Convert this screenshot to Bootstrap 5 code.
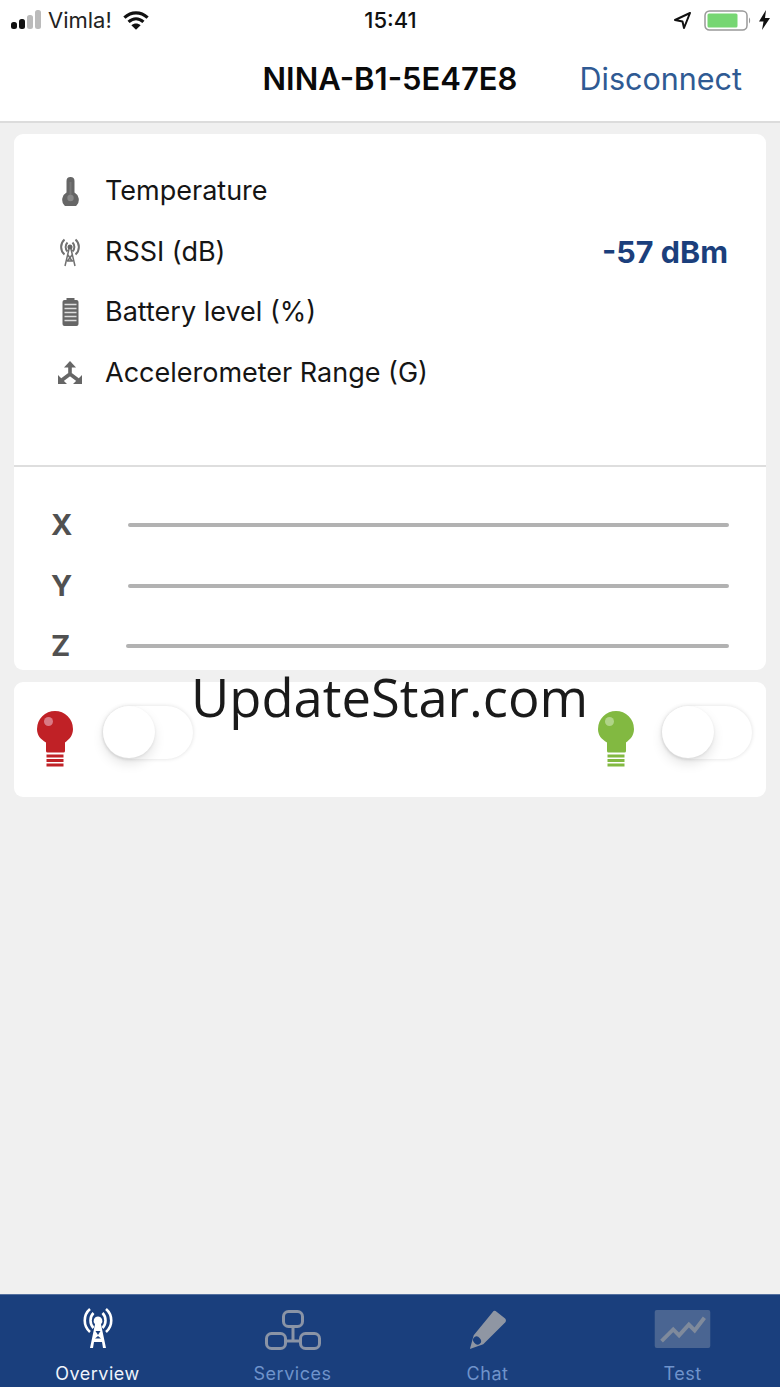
<!DOCTYPE html>
<html lang="en">
<head>
    <meta charset="UTF-8">
    <meta name="viewport" content="width=device-width, initial-scale=1.0">
    <title>NINA-B1-5E47E8</title>
    <link href="https://cdn.jsdelivr.net/npm/bootstrap@5.3.0/dist/css/bootstrap.min.css" rel="stylesheet">
    <style>
        html, body { height: 100%; overflow: hidden; }
        body { background: #f0f0f0; font-family: Inter, "Liberation Sans", sans-serif; color: #111; }
        .phone { height: 1387px; position: relative; }
        .top-area { background: #fff; border-bottom: 2px solid #dcdcdc; height: 123px; }
        .status-bar { height: 40px; padding: 0 10px 0 11px; font-size: 22px; line-height: 1; }
        .status-bar > div { flex: 1 1 0; }
        .status-time { font-weight: 500; font-size: 22px; text-align: center; }
        .carrier { margin-left: 6px; margin-right: 11px; color: #222; }
        .nav-head { height: 81px; position: relative; }
        .nav-title { font-size: 31px; font-weight: 600; color: #0a0a0a; padding-bottom: 2px; }
        .nav-action { position: absolute; right: 38px; top: 24px; font-size: 30.5px; line-height: 1; color: #2f5a93; text-decoration: none; }
        .panel { background: #fff; border-radius: 9px; margin: 0 14px; }
        .panel-a { margin-top: 11px; height: 536px; overflow: hidden; }
        .panel-b { margin-top: 12px; height: 115px; padding: 23px 14px 0 23px; }
        .info-list { height: 333px; padding: 27px 38px 0 36px; border-bottom: 2px solid #dedede; }
        .info-row { height: 60.4px; }
        .info-ico { width: 40px; margin-right: 15px; }
        .info-label { font-size: 27px; color: #151515; padding-top: 1px; }
        .info-val { font-size: 30.5px; font-weight: 700; color: #1b3f7c; }
        .axis-list { padding: 28px 37px 0 37px; }
        .axis-row { height: 60.4px; }
        .axis-name { font-size: 29px; font-weight: 700; color: #515151; width: 77px; }
        .axis-name.short { width: 75px; }
        .axis-line { height: 4px; border-radius: 2px; background: #b2b2b2; }
        .bulb-svg { margin-top: 6px; }
        .fake-switch { width: 90px; height: 53px; margin-top: 1px; border-radius: 27px; background: #fff; box-shadow: 0 0 4px rgba(0,0,0,.13); position: relative; }
        .fake-switch.first { margin-left: 30px; }
        .fake-switch.second { margin-left: 28px; }
        .fake-knob { position: absolute; left: 0; top: 0; width: 52px; height: 52px; border-radius: 50%; background: #fff; box-shadow: 0 6px 12px rgba(0,0,0,.1), 0 1px 3px rgba(0,0,0,.08); }
        .tabbar { position: absolute; left: 0; right: 0; bottom: 0; height: 93px; background: #1a3f7d; border-top: 1px solid #54709f; }
        .tab-item { flex: 1 1 0; padding-top: 15px; height: 100%; }
        .tab-ico { height: 43px; }
        .tab-ico svg { display: inline-block; vertical-align: top; }
        .tab-ico .raised { margin-top: -3px; }
        .tab-text { font-size: 18px; letter-spacing: .5px; color: #6f93cb; margin-top: 10px; line-height: 22px; }
        .tab-text.on { color: #eef3fb; }
        .stamp { position: absolute; left: 191px; top: 660px; font-family: "Open Sans", sans-serif; font-size: 52.5px; line-height: 74px; color: #1a1a1a; }
    </style>
</head>
<body>
    <div class="phone">
        <div class="top-area">
            <div class="status-bar d-flex align-items-center">
                <div class="d-flex align-items-center">
                    <svg width="31" height="20" viewBox="0 0 31 20"><rect x="0" y="12" width="6" height="7" rx="2.500" fill="#111"/><rect x="8" y="9" width="6" height="10" rx="2.500" fill="#111"/><rect x="16" y="5" width="6" height="14" rx="2.500" fill="#bbb"/><rect x="24" y="0" width="6" height="19" rx="2.500" fill="#bbb"/></svg>
                    <span class="carrier">Vimla!</span>
                    <svg width="26" height="19" viewBox="0 0 28 20"><path d="M1.500 7C9 0 19 0 26.500 7" fill="none" stroke="#111" stroke-width="3.400"/><path d="M6 11.500c5-4.500 11-4.500 16 0" fill="none" stroke="#111" stroke-width="3.400"/><path d="M14 20l-5-5c3-2.500 7-2.500 10 0z" fill="#111"/></svg>
                </div>
                <div class="status-time">15:41</div>
                <div class="d-flex align-items-center justify-content-end">
                    <svg width="19" height="19" viewBox="0 0 19 19" class="me-2"><path d="M17 2L2 9l7.500 1.500L11 17z" fill="none" stroke="#111" stroke-width="2" stroke-linejoin="round"/></svg>
                    <svg width="47" height="21" viewBox="0 0 47 21" class="ms-1"><rect x="1" y="1" width="42" height="19" rx="4.500" fill="#fff" stroke="#999" stroke-width="1.500"/><rect x="3.500" y="3.500" width="30" height="14" rx="1.500" fill="#76d672"/><path d="M45 7.500c1.500 1 1.500 5 0 6z" fill="#999"/></svg>
                    <svg width="11" height="20" viewBox="0 0 11 20" class="ms-2"><path d="M7 0L0 11.500h4.500L3 20l8-12H6z" fill="#111"/></svg>
                </div>
            </div>
            <div class="nav-head d-flex align-items-center justify-content-center">
                <div class="nav-title">NINA-B1-5E47E8</div>
                <a class="nav-action" href="#">Disconnect</a>
            </div>
        </div>

        <div class="panel panel-a">
            <div class="info-list">
                <div class="info-row d-flex align-items-center">
                    <div class="info-ico d-flex justify-content-center">
                        <svg width="17" height="29" viewBox="0 0 17 29"><path d="M4.500 4a4 4 0 0 1 8 0v11.500a8.300 8.300 0 1 1-8 0z" fill="#666"/><path d="M7.500 5h2v14h-2z" fill="#777"/><circle cx="8.500" cy="21" r="3.200" fill="#8a8a8a"/></svg>
                    </div>
                    <span class="info-label">Temperature</span>
                </div>
                <div class="info-row d-flex align-items-center">
                    <div class="info-ico d-flex justify-content-center">
                        <svg width="22" height="30" viewBox="0 0 22 30" fill="none" stroke="#707070" stroke-width="2"><path d="M5.500 2.500c-4.500 4-4.500 11 0 15M16.500 2.500c4.500 4 4.500 11 0 15M8.500 5.500c-2.500 2.500-2.500 6.500 0 9M13.500 5.500c2.500 2.500 2.500 6.500 0 9"/><circle cx="11" cy="10" r="2.500" fill="#666" stroke="none"/><path d="M10 12L6 29M12 12l4 17M8 24h6M9 18l4 6M13 18l-4.500 6" stroke-width="1.500"/></svg>
                    </div>
                    <span class="info-label">RSSI (dB)</span>
                    <span class="info-val ms-auto">-57 dBm</span>
                </div>
                <div class="info-row d-flex align-items-center">
                    <div class="info-ico d-flex justify-content-center">
                        <svg width="17" height="28" viewBox="0 0 17 28"><rect x="4.500" y="0" width="8" height="3" fill="#666"/><rect x="0.500" y="2" width="16" height="26" rx="2" fill="#666"/><path d="M2.500 6.500h12M2.500 10.500h12M2.500 14.500h12M2.500 18.500h12M2.500 22.500h12" stroke="#ddd" stroke-width="1.500"/></svg>
                    </div>
                    <span class="info-label">Battery level (%)</span>
                </div>
                <div class="info-row d-flex align-items-center">
                    <div class="info-ico d-flex justify-content-center">
                        <svg width="24" height="23" viewBox="0 0 24 23"><path d="M12 0l6 6.500H6z" fill="#666"/><path d="M12 5v8l-8 6M12 13l8 6" fill="none" stroke="#666" stroke-width="3.600"/><path d="M0 23v-9l9 9zM24 23v-9l-9 9z" fill="#666"/></svg>
                    </div>
                    <span class="info-label">Accelerometer Range (G)</span>
                </div>
            </div>
            <div class="axis-list">
                <div class="axis-row d-flex align-items-center"><span class="axis-name">X</span><div class="axis-line flex-grow-1"></div></div>
                <div class="axis-row d-flex align-items-center"><span class="axis-name">Y</span><div class="axis-line flex-grow-1"></div></div>
                <div class="axis-row d-flex align-items-center"><span class="axis-name short">Z</span><div class="axis-line flex-grow-1"></div></div>
            </div>
        </div>

        <div class="panel panel-b d-flex align-items-start">
            <svg width="36" height="56" viewBox="0 0 36 56" class="bulb-svg"><path d="M18 0a18 18 0 0 1 18 18c0 6.500-3.500 10-8 13.500V40a1.500 1.500 0 0 1-1.500 1.500h-16A1.500 1.500 0 0 1 9 40v-8.500C3.500 28 0 24.500 0 18A18 18 0 0 1 18 0z" fill="#c02126"/><circle cx="11.500" cy="10.500" r="4.500" fill="#d97a85"/><path d="M9.500 45h17M9.500 49.500h17M9.500 54h17" stroke="#c02126" stroke-width="2.800"/></svg>
            <div class="fake-switch first me-auto"><div class="fake-knob"></div></div>
            <svg width="36" height="56" viewBox="0 0 36 56" class="bulb-svg"><path d="M18 0a18 18 0 0 1 18 18c0 6.500-3.500 10-8 13.500V40a1.500 1.500 0 0 1-1.500 1.500h-16A1.500 1.500 0 0 1 9 40v-8.500C3.500 28 0 24.500 0 18A18 18 0 0 1 18 0z" fill="#82b941"/><circle cx="11.500" cy="10.500" r="4.500" fill="#b0d488"/><path d="M9.500 45h17M9.500 49.500h17M9.500 54h17" stroke="#82b941" stroke-width="2.800"/></svg>
            <div class="fake-switch second"><div class="fake-knob"></div></div>
        </div>

        <div class="stamp">UpdateStar.com</div>

        <div class="tabbar d-flex">
            <div class="tab-item text-center">
                <div class="tab-ico">
                    <svg width="30" height="42" viewBox="0 0 30 42" fill="none" stroke="#fff" stroke-width="2.600" class="raised"><path d="M7 2C0 8 0 19 7 25M23 2c7 6 7 17 0 23M10.500 6c-4 4-4 11 0 15M19.500 6c4 4 4 11 0 15"/><path d="M15 9.500a4.500 4.500 0 0 1 3 7.800L23 41h-3l-1-6h-8l-1 6H7l5-23.700a4.500 4.500 0 0 1 3-7.800z" fill="#fff" stroke="none"/><path d="M12.500 24h5l-2.500 4zM12 31.500h6l-3-2.500z" fill="#1a3f7d" stroke="none"/></svg>
                </div>
                <div class="tab-text on">Overview</div>
            </div>
            <div class="tab-item text-center">
                <div class="tab-ico">
                    <svg width="56" height="40" viewBox="0 0 56 40" fill="none" stroke="#8a94a6" stroke-width="3"><rect x="18.500" y="1.500" width="19" height="15" rx="5"/><rect x="1.500" y="23.500" width="19" height="15" rx="5"/><rect x="35.500" y="23.500" width="19" height="15" rx="5"/><path d="M28 16.500v15M20.500 31h15"/></svg>
                </div>
                <div class="tab-text">Services</div>
            </div>
            <div class="tab-item text-center">
                <div class="tab-ico">
                    <svg width="40" height="40" viewBox="0 0 40 42"><path d="M28 1l10 8a3 3 0 0 1 .5 3.500L15 36 1 41l4-14.500L25 2a2.500 2.500 0 0 1 3-1z" fill="#8f96a3"/><ellipse cx="8.500" cy="32" rx="3.800" ry="4.500" transform="rotate(-40 8.500 32)" fill="#1a3f7d"/></svg>
                </div>
                <div class="tab-text">Chat</div>
            </div>
            <div class="tab-item text-center">
                <div class="tab-ico">
                    <svg width="57" height="38" viewBox="0 0 57 39"><rect width="57" height="39" rx="2" fill="#4a6592"/><path d="M7 32l12-12 6 6 10-11 6 6 10-13" fill="none" stroke="#7f8a9c" stroke-width="4"/></svg>
                </div>
                <div class="tab-text">Test</div>
            </div>
        </div>
    </div>
    <script src="https://cdn.jsdelivr.net/npm/bootstrap@5.3.0/dist/js/bootstrap.bundle.min.js"></script>
</body>
</html>
